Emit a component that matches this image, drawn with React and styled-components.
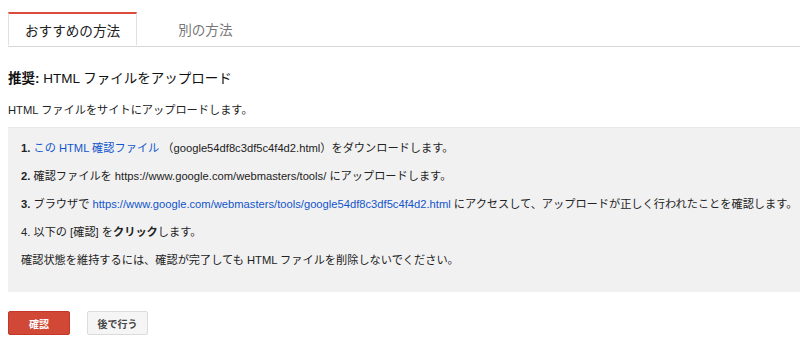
import React from 'react';
import styled, { createGlobalStyle } from 'styled-components';

const GlobalStyle = createGlobalStyle`
  body {
    margin: 0;
    background: #fff;
    font-family: "Liberation Sans", Arial, "Noto Sans CJK JP", sans-serif;
    color: #222;
    overflow: hidden;
  }
`;

const Page = styled.div`
  padding: 12px 0 0 8px;
  width: 792px;
`;

const TabBar = styled.div`
  display: flex;
  border-bottom: 1px solid #d6d6d6;
  height: 34px;
`;

const Tab = styled.div`
  display: flex;
  align-items: center;
  font-size: 13.6px;
  padding: ${props => (props.active ? '0 16px' : '0 40px')};
  color: ${props => (props.active ? '#222' : '#777')};
  background: #fff;
  border-top: 2px solid ${props => (props.active ? '#dd4b39' : 'transparent')};
  border-left: 1px solid ${props => (props.active ? '#e0e0e0' : 'transparent')};
  border-right: 1px solid ${props => (props.active ? '#e0e0e0' : 'transparent')};
  margin-bottom: ${props => (props.active ? '-1px' : '0')};
  height: ${props => (props.active ? '33px' : '32px')};
  box-sizing: border-box;
`;

const Heading = styled.h2`
  margin: 23px 0 0;
  font-size: 13.5px;
  font-weight: normal;
  line-height: 18px;
  color: #111;

  strong {
    font-weight: bold;
  }
`;

const Intro = styled.p`
  margin: 14px 0 0;
  font-size: 11.2px;
  line-height: 16px;
`;

const Steps = styled.div`
  margin-top: 9px;
  background: #f1f1f1;
  border-top: 1px solid #e8e8e8;
  padding: 6px 0 18px 13px;
  font-size: 11.2px;
`;

const Step = styled.p`
  margin: 0;
  line-height: 28px;
  white-space: nowrap;

  b {
    font-weight: bold;
  }
`;

const Link = styled.a`
  color: #1155cc;
  text-decoration: none;
`;

const Actions = styled.div`
  display: flex;
  gap: 17px;
  margin-top: 19px;
`;

const Button = styled.button`
  height: 24px;
  width: ${props => (props.primary ? '62px' : '61px')};
  font-family: inherit;
  font-size: 10px;
  font-weight: bold;
  border-radius: 2px;
  border: 1px solid ${props => (props.primary ? '#c53727' : '#dcdcdc')};
  background: ${props => (props.primary ? '#d14836' : '#f5f5f5')};
  color: ${props => (props.primary ? '#fff' : '#444')};
  padding: 0;
`;

export default function App() {
  return (
    <>
      <GlobalStyle />
      <Page>
        <TabBar>
          <Tab active>おすすめの方法</Tab>
          <Tab>別の方法</Tab>
        </TabBar>
        <Heading>
          <strong>推奨:</strong> HTML ファイルをアップロード
        </Heading>
        <Intro>HTML ファイルをサイトにアップロードします。</Intro>
        <Steps>
          <Step>
            <b>1.</b> <Link>この HTML 確認ファイル</Link> （google54df8c3df5c4f4d2.html）をダウンロードします。
          </Step>
          <Step>
            <b>2.</b> 確認ファイルを https://www.google.com/webmasters/tools/ にアップロードします。
          </Step>
          <Step>
            <b>3.</b> ブラウザで{' '}
            <Link>https://www.google.com/webmasters/tools/google54df8c3df5c4f4d2.html</Link>{' '}
            にアクセスして、アップロードが正しく行われたことを確認します。
          </Step>
          <Step>
            4. 以下の [確認] を<b>クリック</b>します。
          </Step>
          <Step>確認状態を維持するには、確認が完了しても HTML ファイルを削除しないでください。</Step>
        </Steps>
        <Actions>
          <Button primary>確認</Button>
          <Button>後で行う</Button>
        </Actions>
      </Page>
    </>
  );
}
